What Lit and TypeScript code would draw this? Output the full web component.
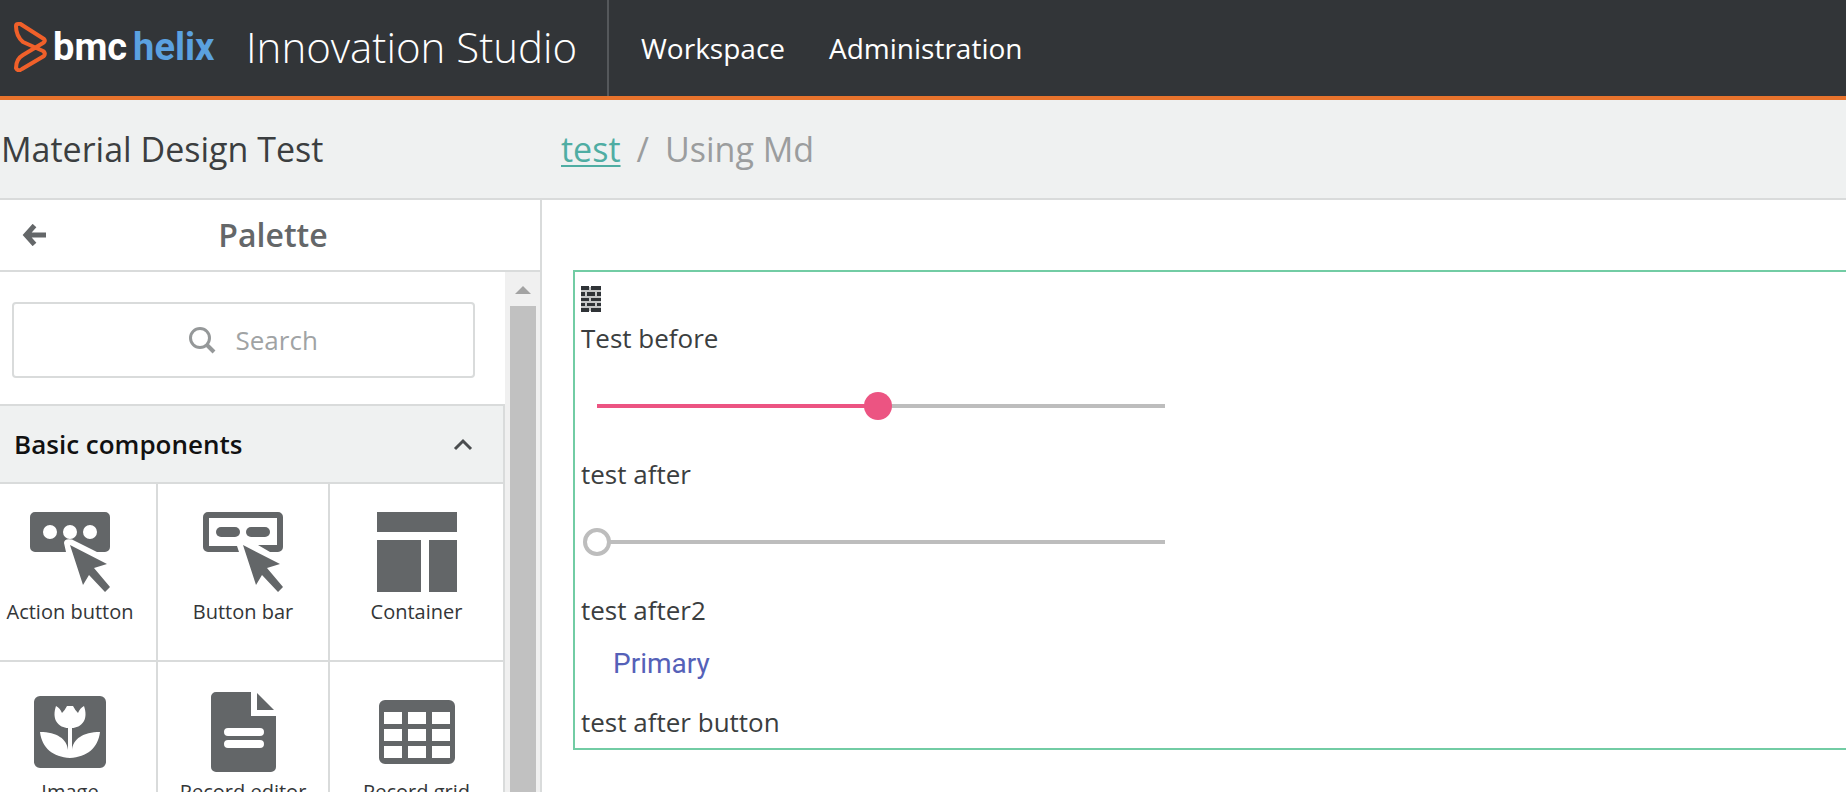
import { LitElement, html, css, svg } from "lit";
import { customElement, state } from "lit/decorators.js";

const icons = {
  action: svg`<path fill-rule="evenodd" d="M5 0h70a5 5 0 0 1 5 5v30a5 5 0 0 1-5 5h-8L42 27.500Q34 26 34 31L36 40H5a5 5 0 0 1-5-5V5a5 5 0 0 1 5-5ZM20 13a7 7 0 1 0 0 14a7 7 0 0 0 0-14ZM40 13a7 7 0 1 0 0 14a7 7 0 0 0 0-14ZM60 13a7 7 0 1 0 0 14a7 7 0 0 0 0-14Z"/><path d="M40 33L77 52L64 56L80 75L75 80L59 63L53 73Z"/>`,
  bar: svg`<path fill-rule="evenodd" d="M5 0h70a5 5 0 0 1 5 5v30a5 5 0 0 1-5 5h-8L55 33H74V6H6v28H34L36 40H5a5 5 0 0 1-5-5V5a5 5 0 0 1 5-5Z"/><rect x="13" y="15" width="24" height="10" rx="5"/><rect x="43" y="15" width="24" height="10" rx="5"/><path d="M40 33L77 52L64 56L80 75L75 80L59 63L53 73Z"/>`,
  container: svg`<path d="M0 0h80v20H0zM0 28h44v52H0zM52 28h28v52H52z"/>`,
  image: svg`<path fill-rule="evenodd" d="M10 4h60a6 6 0 0 1 6 6v60a6 6 0 0 1-6 6H10a6 6 0 0 1-6-6V10a6 6 0 0 1 6-6ZM26 14C24 20 24 25 26 29C29 34 34 36 38 36V58C37 47 27 40 10 40C12 56 23 65 40 66C57 65 68 56 70 40C53 40 43 47 42 58V36C46 36 51 34 54 29C56 25 56 20 54 14Q50 16 48 21Q45 18 43 14H37Q35 18 32 21Q30 16 26 14Z"/>`,
  editor: svg`<path fill-rule="evenodd" d="M13 0H48V24H73V75a5 5 0 0 1-5 5H13a5 5 0 0 1-5-5V5a5 5 0 0 1 5-5ZM25 36a4 4 0 0 0 0 8H57a4 4 0 0 0 0-8ZM25 48a4 4 0 0 0 0 8H57a4 4 0 0 0 0-8Z"/><path d="M54 1L71 18H54Z"/>`,
  grid: svg`<path fill-rule="evenodd" d="M8 8h64a6 6 0 0 1 6 6v52a6 6 0 0 1-6 6H8a6 6 0 0 1-6-6V14a6 6 0 0 1 6-6ZM7 20v12h18V20ZM31 20v12h18V20ZM55 20v12h18V20ZM7 37v12h18V37ZM31 37v12h18V37ZM55 37v12h18V37ZM7 54v12h18V54ZM31 54v12h18V54ZM55 54v12h18V54Z"/>`,
};

const components = [
  { label: "Action button", icon: icons.action },
  { label: "Button bar", icon: icons.bar },
  { label: "Container", icon: icons.container },
  { label: "Image", icon: icons.image },
  { label: "Record editor", icon: icons.editor },
  { label: "Record grid", icon: icons.grid },
];

@customElement("studio-header")
export class StudioHeader extends LitElement {
  static styles = css`
    :host { display: flex; align-items: stretch; height: 96px; background: #323538; border-bottom: 4px solid #e8732c; color: #fff; }
    .brand { display: flex; align-items: center; width: 609px; flex: none; box-sizing: border-box; padding: 0 0 2px 14px; border-right: 2px solid #55585b; }
    .mark { width: 33px; height: 50px; margin-right: 6px; }
    .logo { display: flex; gap: 6px; width: 193px; font: 700 38px/48px Roboto, sans-serif; }
    .helix { color: #5ba1e0; }
    .product { font: 300 42px/56px "Open Sans", sans-serif; white-space: nowrap; }
    .nav { display: flex; align-items: center; gap: 44px; padding-left: 32px; }
    .link { color: #fff; text-decoration: none; font: 500 28px/38px "Open Sans", sans-serif; }
  `;
  render() {
    return html`
      <div class="brand">
        <svg class="mark" viewBox="0 0 33 50" fill="none" stroke="#f0602a" stroke-width="4" stroke-linejoin="round" aria-hidden="true">
          <path d="M4 2Q6 1 8 3L30 17Q32 19 29 21L9 33Q2 37 2 46Q4 50 8 47L30 34Q32 31 29 29L9 20Q2 14 2 4Q2 2 4 2Z" />
        </svg>
        <div class="logo"><span>bmc</span><span class="helix">helix</span></div>
        <span class="product">Innovation Studio</span>
      </div>
      <nav class="nav">
        <a class="link" href="#workspace">Workspace</a>
        <a class="link" href="#administration">Administration</a>
      </nav>
    `;
  }
}

@customElement("component-palette")
export class ComponentPalette extends LitElement {
  @state() private open = true;

  static styles = css`
    :host { display: flex; flex-direction: column; min-height: 0; border-right: 2px solid #d9dbdb; background: #fff; }
    .title { display: grid; grid-template-columns: 46px 1fr 40px; align-items: center; height: 70px; flex: none; border-bottom: 2px solid #d9dbdb; }
    .heading { margin: 0; text-align: center; color: #646769; font: 600 32px/44px "Open Sans", sans-serif; }
    .back { display: flex; justify-content: flex-end; padding: 0; border: 0; background: none; color: #646769; }
    .arrow { width: 24px; height: 22px; }
    .body { display: flex; flex: 1; min-height: 0; }
    .content { flex: 1; min-width: 0; overflow: hidden; }
    .search { display: flex; align-items: center; justify-content: center; gap: 20px; height: 72px; margin: 30px 30px 26px 12px; padding-left: 20px; border: 2px solid #d9dbdb; border-radius: 4px; color: #959899; }
    .lens { width: 28px; height: 28px; }
    .field { width: 84px; padding: 0; border: 0; outline: 0; background: none; font: 400 26px/36px "Open Sans", sans-serif; field-sizing: content; }
    .field::placeholder { color: #a0a3a4; opacity: 1; }
    .group { display: flex; align-items: center; justify-content: space-between; width: 100%; height: 80px; padding: 0 30px 0 14px; border: solid #d9dbdb; border-width: 2px 2px 2px 0; background: #eff1f1; color: #111; font: 600 26px/36px "Open Sans", sans-serif; }
    .chevron { width: 20px; height: 14px; }
    .grid { display: grid; grid-template-columns: 174px 172px 1fr; grid-auto-rows: 178px; margin-left: -16px; }
    .tile { display: flex; flex-direction: column; align-items: center; gap: 6px; padding: 28px 0 0; border: solid #d9dbdb; border-width: 0 2px 2px 0; background: #fff; color: #333638; font: 400 20px/28px "Open Sans", sans-serif; }
    .tile:nth-child(n + 4) { padding-top: 30px; }
    .glyph { width: 80px; height: 80px; fill: #636668; }
    .scrollbar { display: flex; flex-direction: column; width: 35px; background: #f0f0f0; }
    .up { width: 16px; height: 8px; margin: 14px 10px 12px; fill: #a3a3a3; }
    .thumb { flex: 1; margin: 0 4px 0 5px; background: #c1c1c1; }
  `;
  render() {
    return html`
      <header class="title">
        <button class="back" aria-label="Back">
          <svg class="arrow" viewBox="0 0 24 22" fill="none" stroke="currentColor" stroke-width="5" aria-hidden="true"><path d="M24 11H4M12.500 1.500L4 11L12.500 20.500" /></svg>
        </button>
        <h2 class="heading">Palette</h2>
      </header>
      <div class="body">
        <div class="content">
          <label class="search">
            <svg class="lens" viewBox="0 0 28 28" fill="none" stroke="currentColor" aria-hidden="true"><circle cx="12" cy="12" r="9.500" stroke-width="3" /><path d="M19 19L26 26" stroke-width="4" /></svg>
            <input class="field" type="text" placeholder="Search" aria-label="Search" />
          </label>
          <button class="group" aria-expanded=${this.open} @click=${() => (this.open = !this.open)}>
            Basic components
            <svg class="chevron" viewBox="0 0 20 14" fill="none" stroke="#4a4d4f" stroke-width="3" aria-hidden="true"><path d="M2 12L10 4L18 12" /></svg>
          </button>
          ${this.open
            ? html`<div class="grid">
                ${components.map((c) => html`<button class="tile"><svg class="glyph" viewBox="0 0 80 80" aria-hidden="true">${c.icon}</svg>${c.label}</button>`)}
              </div>`
            : ""}
        </div>
        <div class="scrollbar" aria-hidden="true">
          <svg class="up" viewBox="0 0 16 8"><path d="M8 0L16 8H0Z" /></svg>
          <div class="thumb"></div>
        </div>
      </div>
    `;
  }
}

@customElement("view-canvas")
export class ViewCanvas extends LitElement {
  @state() private first = 49.5;
  @state() private second = 0;

  static styles = css`
    :host { display: block; padding: 70px 0 0 31px; background: #fff; }
    .panel { padding: 14px 0 8px 6px; border: 2px solid #72cca4; border-right: 0; color: #3b3e40; font: 400 26px/36px "Open Sans", sans-serif; }
    .wall { display: block; width: 20px; height: 26px; margin-bottom: 8px; fill: #2f3337; }
    .mortar { fill: #c4c6c7; }
    .text { display: block; }
    .row { display: flex; align-items: center; height: 100px; padding-left: 2px; }
    .slider { appearance: none; width: 596px; height: 28px; margin: 0; background: none; }
    .slider::-webkit-slider-runnable-track {
      height: 28px;
      background: linear-gradient(to right, #ec5482 var(--fill), #bdbdbd var(--fill)) center / calc(100% - 28px) 4px no-repeat;
    }
    .slider::-webkit-slider-thumb { appearance: none; box-sizing: border-box; width: 28px; height: 28px; border-radius: 50%; background: #ec5482; }
    .slider.empty::-webkit-slider-thumb { border: 4px solid #bdbdbd; background: #fff; }
    .primary { display: block; height: 72px; margin-bottom: 4px; padding: 0 32px; border: 0; background: none; color: #5561b8; font: 400 28px/36px Roboto, sans-serif; }
  `;

  private slider(id: string, value: number, set: (v: number) => void) {
    return html`<div class="row">
      <input id=${id} class="slider ${value === 0 ? "empty" : ""}" type="range" min="0" max="100" step="0.5"
        style="--fill: ${value}%" .value=${String(value)}
        @input=${(e: Event) => set(Number((e.target as HTMLInputElement).value))} />
    </div>`;
  }

  render() {
    return html`
      <section class="panel">
        <svg class="wall" viewBox="0 0 20 26" aria-hidden="true">
          <path class="mortar" d="M0 1h20v24H0z" />
          <path d="M0 0h8v4H0zM10 0h10v4H10zM0 6h4v4H0zM6 6h8v4H6zM16 6h4v4h-4zM0 12h8v3H0zM10 12h10v3H10zM0 17h4v3H0zM6 17h8v3H6zM16 17h4v3h-4zM0 22h8v4H0zM10 22h10v4H10z" />
        </svg>
        <label class="text" for="before">Test before</label>
        ${this.slider("before", this.first, (v) => (this.first = v))}
        <label class="text" for="after">test after</label>
        ${this.slider("after", this.second, (v) => (this.second = v))}
        <span class="text">test after2</span>
        <button class="primary">Primary</button>
        <span class="text">test after button</span>
      </section>
    `;
  }
}

@customElement("app-root")
export class AppRoot extends LitElement {
  static styles = css`
    :host { display: flex; flex-direction: column; height: 100vh; overflow: hidden; background: #fff; }
    .titlebar { display: grid; grid-template-columns: 561px 1fr; align-items: center; height: 98px; flex: none; border-bottom: 2px solid #d9dbdb; background: #eff1f1; font: 400 34px/48px "Open Sans", sans-serif; }
    .name { margin: 0; padding-left: 1px; color: #3b3e40; font: inherit; }
    .crumbs { display: flex; gap: 16px; color: #9b9d9e; }
    .crumb { color: #4fada3; text-decoration-thickness: 2px; text-underline-offset: 3px; }
    .work { display: grid; grid-template-columns: 542px 1fr; flex: 1; min-height: 0; }
  `;
  render() {
    return html`
      <studio-header></studio-header>
      <div class="titlebar">
        <h1 class="name">Material Design Test</h1>
        <nav class="crumbs" aria-label="Breadcrumb"><a class="crumb" href="#test">test</a><span>/</span><span>Using Md</span></nav>
      </div>
      <div class="work">
        <component-palette></component-palette>
        <view-canvas></view-canvas>
      </div>
    `;
  }
}
